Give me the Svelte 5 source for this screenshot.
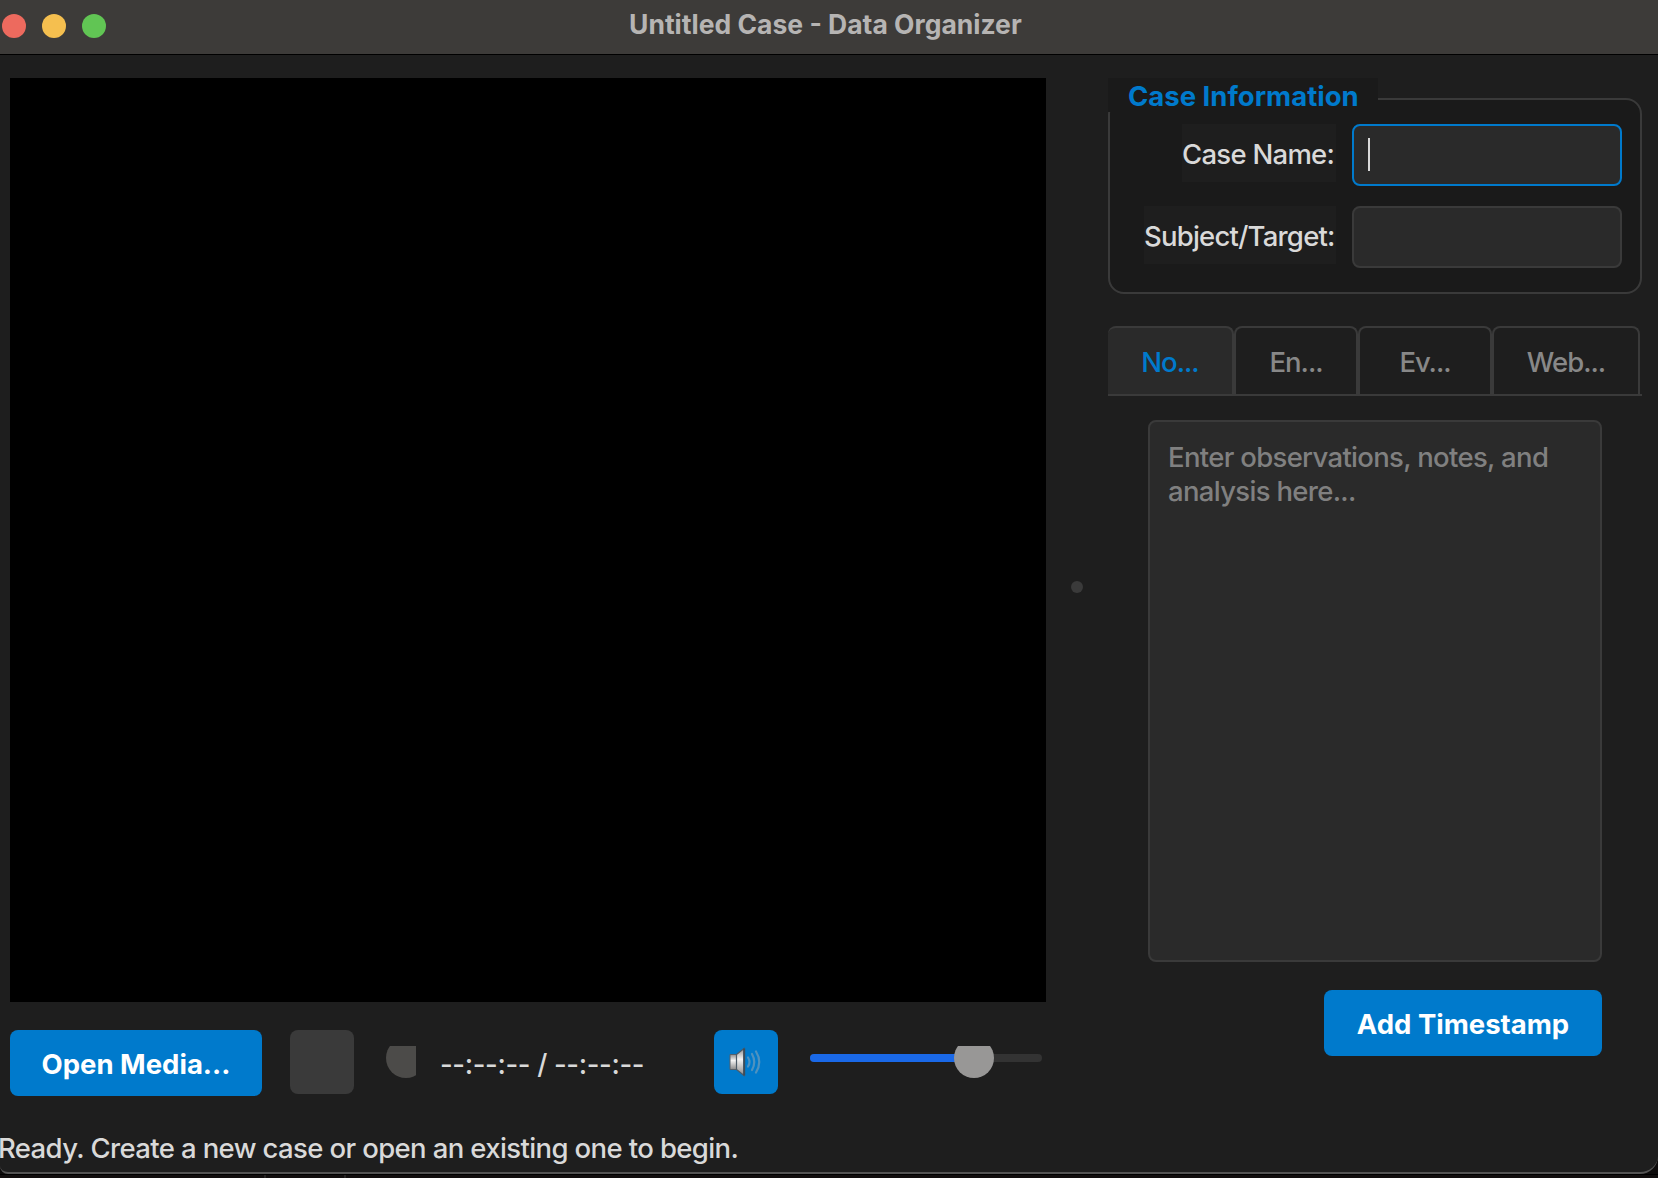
<script>
  const tabs = [
    { label: 'No...', cls: 'notes' },
    { label: 'En...', cls: 'entities' },
    { label: 'Ev...', cls: 'events' },
    { label: 'Web...', cls: 'web' },
  ];
  let active = $state('notes');
</script>

<div class="screen">
  <div class="window">
    <header class="titlebar">
      <div class="lights">
        <span class="light close"></span>
        <span class="light minimize"></span>
        <span class="light zoom"></span>
      </div>
      <h1>Untitled Case - Data Organizer</h1>
    </header>

    <main>
      <section class="media">
        <div class="video"></div>
        <div class="controls">
          <button class="primary open">Open Media...</button>
          <div class="play"></div>
          <svg class="seek" width="30" height="32" viewBox="0 0 30 32">
            <circle cx="20" cy="12" r="20" fill="#4c4b49" />
          </svg>
          <span class="time">--:--:-- / --:--:--</span>
          <button class="mute" aria-label="Mute">
            <svg width="34" height="30" viewBox="0 0 34 30">
              <defs>
                <linearGradient id="cone" x1="0" y1="0" x2="0" y2="1">
                  <stop offset="0" stop-color="#8e8e8e" />
                  <stop offset=".4" stop-color="#f4f4f4" />
                  <stop offset="1" stop-color="#8a8a8a" />
                </linearGradient>
              </defs>
              <path d="M1 7.500H7.500V22.500H1Z" fill="url(#cone)" stroke="#56616b" stroke-width="1" />
              <path d="M7.500 7.500L15 1.500V28.500L7.500 22.500Z" fill="url(#cone)" stroke="#4c5b68" stroke-width="1.2" />
              <path d="M15.200 1.500V28.500" stroke="#3e4c58" stroke-width="2" />
              <g fill="none" stroke="#4f92bf" stroke-width="2.2" stroke-linecap="round">
                <path d="M19 10.500Q22 15 19 19.500" />
                <path d="M23 7Q27.500 15 23 23" />
                <path d="M27 4.500Q33.500 15 27 25.500" />
              </g>
            </svg>
          </button>
          <svg class="volume" width="232" height="34" viewBox="0 0 232 34">
            <rect x="0" y="8" width="232" height="8" rx="4" fill="#333333" />
            <rect x="0" y="8" width="164" height="8" rx="4" fill="#1a69e8" />
            <circle cx="164" cy="12" r="20" fill="#989796" />
          </svg>
        </div>
      </section>

      <div class="splitter"><span></span></div>

      <aside>
        <section class="case">
          <h2>Case Information</h2>
          <div class="field">
            <label for="name">Case Name:</label>
            <div class="input focused" id="name"><i></i></div>
          </div>
          <div class="field">
            <label for="subject">Subject/Target:</label>
            <div class="input" id="subject"></div>
          </div>
        </section>

        <nav>
          {#each tabs as tab}
            <button class="tab {tab.cls}" class:active={active === tab.cls} onclick={() => (active = tab.cls)}>
              {tab.label}
            </button>
          {/each}
        </nav>

        <div class="notes-pane">
          <div class="editor">
            <p>Enter observations, notes, and analysis here...</p>
          </div>
          <button class="primary stamp">Add Timestamp</button>
        </div>
      </aside>
    </main>

    <footer>Ready. Create a new case or open an existing one to begin.</footer>
  </div>
  <div class="behind"><span></span><span></span><span></span></div>
</div>

<style>
  :global(body) {
    margin: 0;
    background: #0d0b0b;
  }
  .screen,
  .screen * {
    box-sizing: border-box;
  }
  .screen {
    width: 1658px;
    height: 1178px;
    overflow: hidden;
    display: flex;
    flex-direction: column;
    font-family: Inter, 'Liberation Sans', sans-serif;
    font-size: 27.5px;
    font-weight: 450;
    line-height: 34px;
    color: #d9d9d9;
    background: #0d0b0b;
  }
  .window {
    height: 1174px;
    flex: none;
    display: flex;
    flex-direction: column;
    background: #1e1e1e;
    border-bottom: 2px solid #545454;
    border-radius: 0 0 18px 8px;
    overflow: hidden;
  }
  button {
    font: inherit;
    border: 0;
    padding: 0;
    display: flex;
    align-items: center;
    justify-content: center;
    white-space: nowrap;
  }
  .titlebar {
    height: 55px;
    flex: none;
    background: #3d3b39;
    border-bottom: 1px solid #000;
    display: grid;
    grid-template-columns: 628px 1fr;
  }
  .lights {
    display: flex;
    gap: 16px;
    padding: 14px 0 0 2px;
  }
  .light {
    width: 24px;
    height: 24px;
    border-radius: 50%;
  }
  .close { background: #ed6a5e; }
  .minimize { background: #f5bf4f; }
  .zoom { background: #61c554; }
  h1 {
    margin: 0;
    padding: 7px 0 0 1px;
    font-size: 26.5px;
    font-weight: 700;
    color: #b6b4b3;
  }
  main {
    height: 1074px;
    flex: none;
    display: grid;
    grid-template-columns: 1046px 62px 534px;
    padding-top: 23px;
  }
  .media {
    padding-left: 10px;
  }
  .video {
    height: 924px;
    background: #000;
  }
  .controls {
    display: flex;
    align-items: flex-start;
    padding-top: 28px;
  }
  .primary {
    background: #007acc;
    color: #fff;
    font-weight: 700;
    height: 66px;
    padding-top: 2px;
    border-radius: 8px;
  }
  .open { width: 252px; }
  .play {
    width: 64px;
    height: 64px;
    margin-left: 28px;
    border-radius: 8px;
    background: #3a3a3a;
  }
  .seek { margin: 16px 0 0 32px; }
  .time {
    width: 274px;
    margin: 17px 0 0 24px;
    letter-spacing: -0.35px;
    white-space: nowrap;
  }
  .mute {
    width: 64px;
    height: 64px;
    border-radius: 8px;
    background: #007acc;
  }
  .volume { margin: 16px 0 0 32px; }
  .splitter {
    display: flex;
    align-items: center;
    justify-content: center;
  }
  .splitter span {
    width: 12px;
    height: 12px;
    border-radius: 50%;
    background: #3a3a3a;
    margin-bottom: 33px;
  }
  .case {
    height: 216px;
    display: flex;
    flex-direction: column;
    position: relative;
    z-index: 0;
  }
  .case::before {
    content: '';
    position: absolute;
    z-index: -1;
    inset: 20px 0 0;
    border: 2px solid #3a3a3a;
    border-radius: 16px;
    background: #1a1a1a;
  }
  h2 {
    margin: 0 0 12px;
    width: 270px;
    height: 34px;
    padding: 1px 0 0 20px;
    background: #1a1a1a;
    font-size: 27.5px;
    font-weight: 700;
    color: #007acc;
  }
  .field {
    display: flex;
    justify-content: flex-end;
    height: 62px;
    padding-right: 20px;
    margin-bottom: 20px;
  }
  label {
    height: 58px;
    padding: 13px 0 0;
    margin-right: 16px;
    background: #1e1e1e;
    white-space: nowrap;
  }
  label[for='name'] {
    width: 154px;
    letter-spacing: -0.73px;
  }
  label[for='subject'] {
    width: 192px;
    letter-spacing: -0.78px;
  }
  .input {
    width: 270px;
    height: 62px;
    border: 2px solid #3a3a3a;
    border-radius: 8px;
    background: #2a2a2a;
    padding: 12px 14px;
  }
  .focused { border-color: #007acc; }
  .input i {
    display: block;
    width: 2px;
    height: 33px;
    background: #d9d9d9;
  }
  nav {
    display: flex;
    height: 70px;
    margin-top: 32px;
    border-bottom: 2px solid #3a3a3a;
  }
  .tab {
    height: 68px;
    border: 2px solid #3a3a3a;
    border-bottom: 0;
    border-radius: 8px 8px 0 0;
    background: #1e1e1e;
    color: #888;
    padding-top: 2px;
    letter-spacing: -1px;
  }
  .notes { width: 126px; border-left: 0; }
  .entities { width: 124px; }
  .events { width: 134px; }
  .web { width: 148px; }
  .active { background: #2a2a2a; color: #007acc; }
  .notes-pane {
    display: flex;
    flex-direction: column;
    align-items: flex-end;
    padding: 24px 40px 0;
  }
  .editor {
    width: 454px;
    height: 542px;
    border: 2px solid #3a3a3a;
    border-radius: 8px;
    background: #2a2a2a;
    color: #808080;
    padding: 18px;
    letter-spacing: -0.68px;
  }
  p { margin: 0; }
  .stamp {
    width: 278px;
    margin-top: 28px;
  }
  footer {
    height: 43px;
    padding-top: 2px;
    margin-left: -2px;
    letter-spacing: -0.62px;
    white-space: nowrap;
  }
  .behind {
    height: 4px;
    display: flex;
    gap: 2px;
    background: #262424;
    border-top: 1px solid #000;
  }
  .behind span { background: #110e0e; }
  .behind span:nth-child(1) { width: 264px; }
  .behind span:nth-child(2) { width: 78px; }
  .behind span:nth-child(3) { flex: 1; }
</style>
